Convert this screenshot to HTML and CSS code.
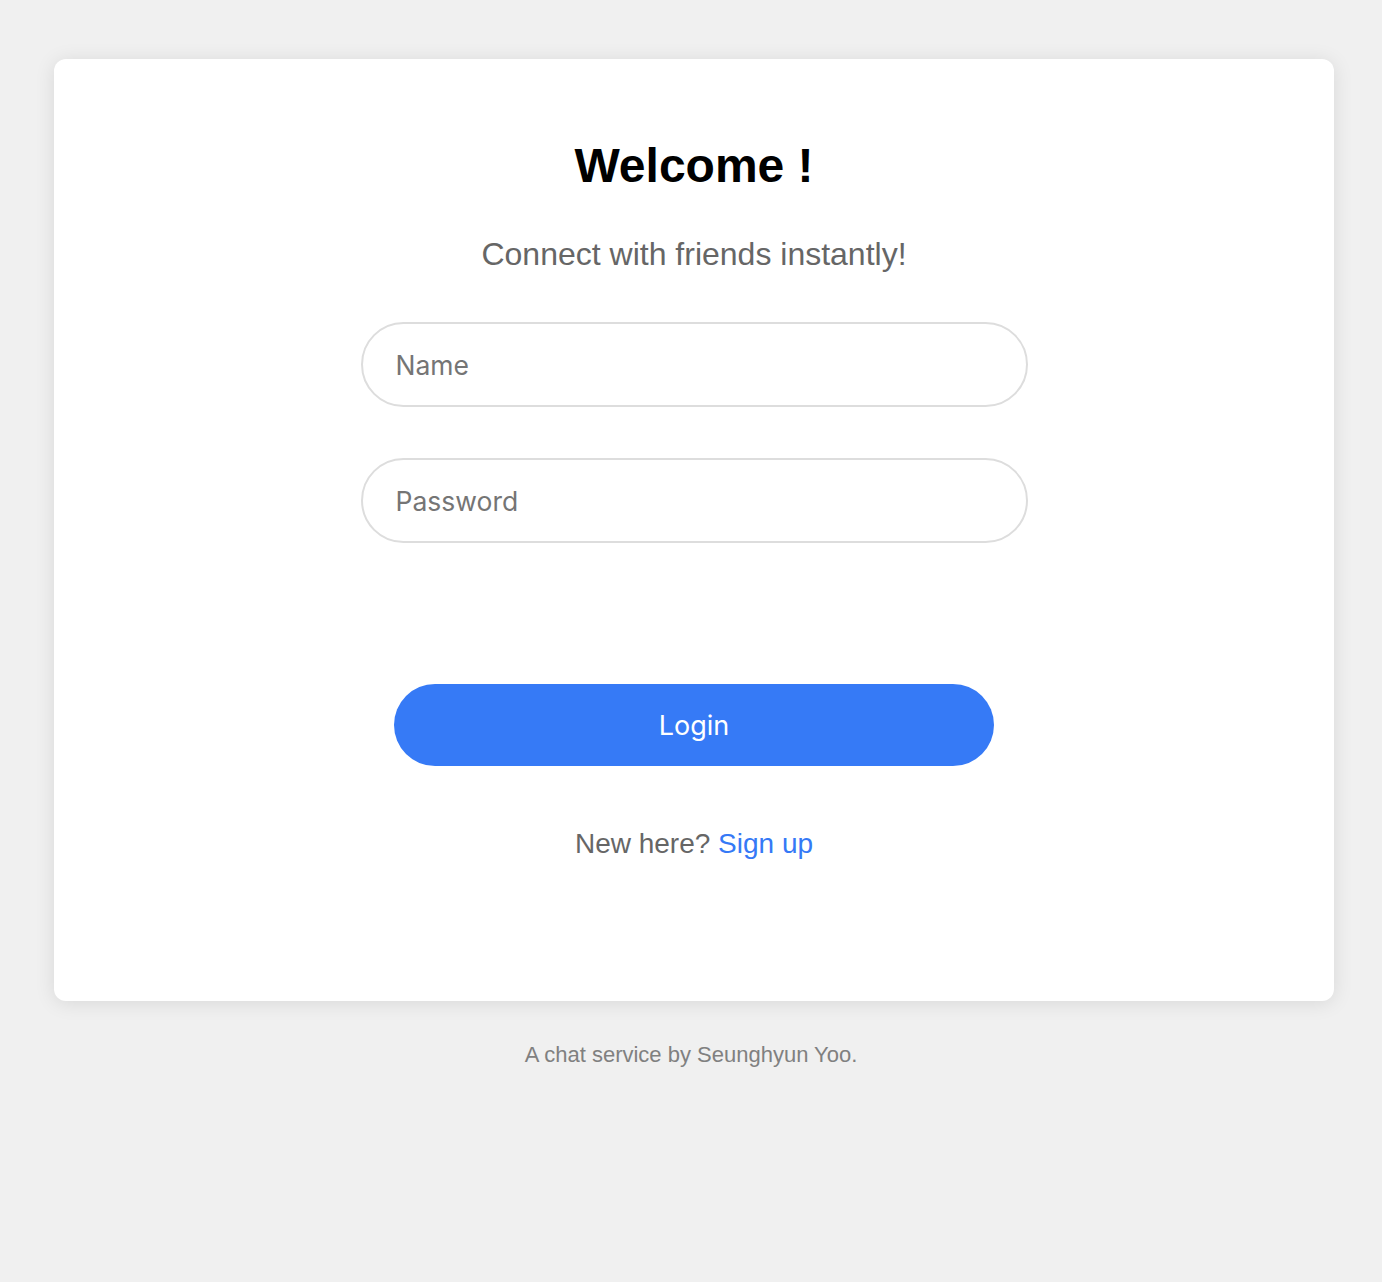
FILE: index.html
```html
<!DOCTYPE html>
<html lang="en">
<head>
    <meta charset="UTF-8">
    <meta name="viewport" content="width=device-width, initial-scale=1.0">
    <title>Login</title>
    <link rel="stylesheet" href="styles.css">
</head>
<body>
    <!-- Login card -->
    <div class="login-card">
        <h1 class="title">Welcome !</h1>
        <p class="subtitle">Connect with friends instantly!</p>

        <form class="login-form">
            <input type="text" class="field" placeholder="Name">
            <input type="password" class="field" placeholder="Password">
            <button type="button" class="login-button">Login</button>
        </form>

        <p class="signup">New here? <a href="#">Sign up</a></p>
    </div>

    <p class="footer">A chat service by Seunghyun Yoo.</p>
</body>
</html>
```

FILE: styles.css
```css
body {
    margin: 0;
    background: #f0f0f0;
    font-family: "Liberation Sans", Arial, sans-serif;
}

/* Card */
.login-card {
    width: 1280px;
    margin: 59px 0 0 54px;
    padding: 79px 0 139px;
    box-sizing: border-box;
    background: #ffffff;
    border-radius: 12px;
    box-shadow: 0 2px 20px rgba(0, 0, 0, 0.1);
    display: flex;
    flex-direction: column;
    align-items: center;
}

.title {
    margin: 0;
    font-size: 48px;
    line-height: 56px;
    font-weight: bold;
    color: #000000;
}

.subtitle {
    margin: 40px 0 0;
    font-size: 32px;
    line-height: 40px;
    color: #666666;
}

/* Form */
.login-form {
    margin-top: 48px;
    display: flex;
    flex-direction: column;
    align-items: center;
}

.field {
    width: 667px;
    height: 85px;
    box-sizing: border-box;
    padding: 0 33px;
    border: 2px solid #dddddd;
    border-radius: 43px;
    font-family: Inter, "Noto Sans", sans-serif;
    font-size: 26.5px;
    color: #333333;
    outline: none;
}

.field + .field {
    margin-top: 51px;
}

.field::placeholder {
    color: #757575;
}

.login-button {
    margin-top: 141px;
    width: 600px;
    height: 82px;
    border: none;
    border-radius: 41px;
    background: #367af6;
    color: #ffffff;
    font-family: Inter, "Noto Sans", sans-serif;
    font-size: 27px;
    cursor: pointer;
}

.signup {
    margin: 60px 0 0;
    font-size: 28px;
    line-height: 36px;
    color: #666666;
}

.signup a {
    color: #3579f6;
    text-decoration: none;
}

/* Footer */
.footer {
    margin: 40px 0 0;
    text-align: center;
    font-size: 22px;
    line-height: 28px;
    color: #808080;
}
```
